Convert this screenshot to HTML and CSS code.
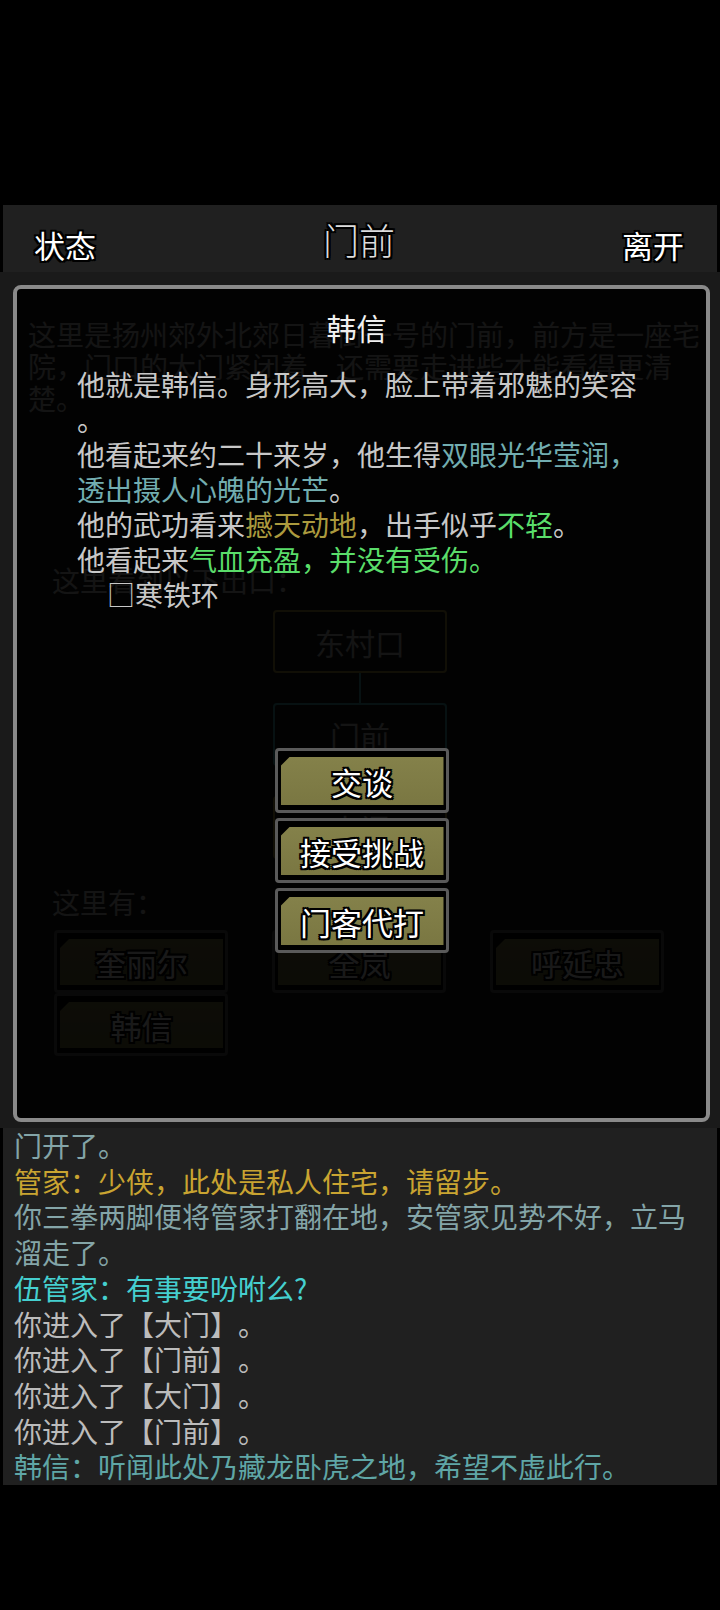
FILE: index.html
```html
<!DOCTYPE html>
<html lang="zh-CN">
<head>
    <meta charset="UTF-8">
    <meta name="viewport" content="width=device-width, initial-scale=1.0">
    <title>门前</title>
    <link rel="stylesheet" href="styles.css">
</head>
<body>
    <div class="screen">
        <div class="top-bar">
            <span class="bar-btn">状态</span>
            <span class="bar-title">门前</span>
            <span class="bar-btn">离开</span>
        </div>

        <div class="scene">
            <p class="scene-desc">这里是扬州郊外北郊日暮街一号的门前，前方是一座宅<br>院，门口的大门紧闭着，还需要走进些才能看得更清<br>楚。</p>
            <p class="scene-label exits-label">这里看到以下出口：</p>
            <div class="map">
                <div class="map-room">东村口</div>
                <div class="map-link"></div>
                <div class="map-room room-here">门前</div>
                <div class="map-link"></div>
                <div class="map-room">大门</div>
            </div>
            <p class="scene-label npc-label">这里有：</p>
            <div class="npc-grid">
                <div class="btn"><span class="btn-face">奎丽尔</span></div>
                <div class="btn"><span class="btn-face">全岚</span></div>
                <div class="btn"><span class="btn-face">呼延忠</span></div>
                <div class="btn"><span class="btn-face">韩信</span></div>
            </div>

            <!-- 人物详情弹窗 -->
            <div class="dialog">
                <h2 class="dialog-title">韩信</h2>
                <div class="dialog-desc">
                    <p>他就是韩信。身形高大，脸上带着邪魅的笑容。</p>
                    <p>他看起来约二十来岁，他生得<span class="c-teal">双眼光华莹润，透出摄人心魄的光芒</span>。</p>
                    <p>他的武功看来<span class="c-gold">撼天动地</span>，出手似乎<span class="c-green">不轻</span>。</p>
                    <p>他看起来<span class="c-green">气血充盈，并没有受伤。</span></p>
                    <p class="equip">□寒铁环</p>
                </div>
                <div class="actions">
                    <div class="btn"><span class="btn-face">交谈</span></div>
                    <div class="btn"><span class="btn-face">接受挑战</span></div>
                    <div class="btn"><span class="btn-face">门客代打</span></div>
                </div>
            </div>
        </div>

        <div class="log">
            <p class="log-grey">门开了。</p>
            <p class="log-gold">管家：少侠，此处是私人住宅，请留步。</p>
            <p class="log-grey">你三拳两脚便将管家打翻在地，安管家见势不好，立马溜走了。</p>
            <p class="log-cyan">伍管家：有事要吩咐么?</p>
            <p class="log-plain">你进入了【大门】。</p>
            <p class="log-plain">你进入了【门前】。</p>
            <p class="log-plain">你进入了【大门】。</p>
            <p class="log-plain">你进入了【门前】。</p>
            <p class="log-npc">韩信：听闻此处乃藏龙卧虎之地，希望不虚此行。</p>
        </div>
    </div>
</body>
</html>
```

FILE: styles.css
```css
body {
    margin: 0;
    background-color: #000;
    font-family: "Noto Sans CJK SC", "Noto Sans", sans-serif;
    color: #c8c8c8;
    text-spacing-trim: space-all;
}
p {
    margin: 0;
}
.screen {
    padding-top: 205px;
}

/* 顶栏 */
.top-bar {
    display: flex;
    justify-content: space-between;
    align-items: center;
    height: 67px;
    margin: 0 3px;
    padding: 0 33px 0 31px;
    box-sizing: border-box;
    background-color: #202020;
}
.bar-btn {
    padding-top: 12px;
    font-size: 31px;
    line-height: 1;
    color: #fff;
    text-shadow: -2px -2px 0 #000, 0 -2px 0 #000, 2px -2px 0 #000, 2px 0 0 #000,
                 2px 2px 0 #000, 0 2px 0 #000, -2px 2px 0 #000, -2px 0 0 #000;
}
.bar-title {
    font-size: 36px;
    font-weight: 300;
    line-height: 1;
    color: #dcdcdc;
    text-shadow: -2px -2px 0 #000, 0 -2px 0 #000, 2px -2px 0 #000, 2px 0 0 #000,
                 2px 2px 0 #000, 0 2px 0 #000, -2px 2px 0 #000, -2px 0 0 #000;
}

/* 场景 */
.scene {
    position: relative;
    height: 856px;
    padding: 46px 28px 0;
    box-sizing: border-box;
    background-color: #1a1a1a;
    font-size: 28px;
    line-height: 32px;
}
.scene-desc {
    white-space: nowrap;
}
.scene-label {
    padding-left: 24px;
}
.exits-label {
    margin-top: 150px;
}
.map {
    display: flex;
    flex-direction: column;
    align-items: center;
    margin-top: 14px;
}
.map-room {
    display: flex;
    align-items: center;
    justify-content: center;
    width: 174px;
    height: 63px;
    box-sizing: border-box;
    border: 2px solid #b09a40;
    border-radius: 4px;
    font-size: 30px;
}
.room-here {
    border-color: #45b0b5;
}
.map-link {
    width: 2px;
    height: 30px;
    background-color: #45b0b5;
}
.npc-label {
    margin-top: 27px;
}
.npc-grid {
    display: grid;
    grid-template-columns: repeat(3, 174px);
    column-gap: 44px;
    margin: 12px 0 0 26px;
}
.npc-grid .btn {
    height: 63px;
}

/* 按钮 */
.btn {
    width: 174px;
    height: 65px;
    box-sizing: border-box;
    padding: 6px 2px 5px 3px;
    border: 3px solid #5a5a5a;
    border-radius: 4px;
    background-color: #000;
}
.btn-face {
    display: flex;
    align-items: center;
    justify-content: center;
    height: 100%;
    background: linear-gradient(#84814a, #7a7742);
    clip-path: polygon(9px 0, 100% 0, 100% 100%, 0 100%, 0 9px);
    font-size: 31px;
    line-height: 1;
    color: #fff;
    text-shadow: -2px -2px 0 #000, 0 -2px 0 #000, 2px -2px 0 #000, 2px 0 0 #000,
                 2px 2px 0 #000, 0 2px 0 #000, -2px 2px 0 #000, -2px 0 0 #000;
}

/* 弹窗 */
.dialog {
    position: absolute;
    top: 13px;
    left: 13px;
    width: 697px;
    height: 837px;
    box-sizing: border-box;
    padding-top: 20px;
    border: 4px solid #8a8a8a;
    border-radius: 8px;
    background-color: rgba(0, 0, 0, 0.9);
}
.dialog-title {
    margin: 0;
    padding-right: 10px;
    font-size: 30px;
    font-weight: 400;
    line-height: 36px;
    text-align: center;
    color: #f0f0f0;
}
.dialog-desc {
    width: 575px;
    margin: 22px 0 0 60px;
    font-size: 28px;
    line-height: 35px;
    color: #c8c8c8;
    line-break: anywhere;
}
.equip {
    padding-left: 30px;
}
.c-teal {
    color: #72adb0;
}
.c-gold {
    color: #ab9a3e;
}
.c-green {
    color: #5add6a;
}
.actions {
    display: flex;
    flex-direction: column;
    align-items: center;
    gap: 5px;
    margin-top: 136px;
}

/* 消息记录 */
.log {
    height: 357px;
    margin: 0 3px;
    padding: 0 11px;
    box-sizing: border-box;
    background-color: #202020;
    font-size: 28px;
    line-height: 35.7px;
}
.log-grey {
    color: #84a5a8;
}
.log-gold {
    color: #c9a431;
}
.log-cyan {
    color: #45cfcf;
}
.log-plain {
    color: #bcbcbc;
}
.log-npc {
    color: #5fa6a6;
}
```
